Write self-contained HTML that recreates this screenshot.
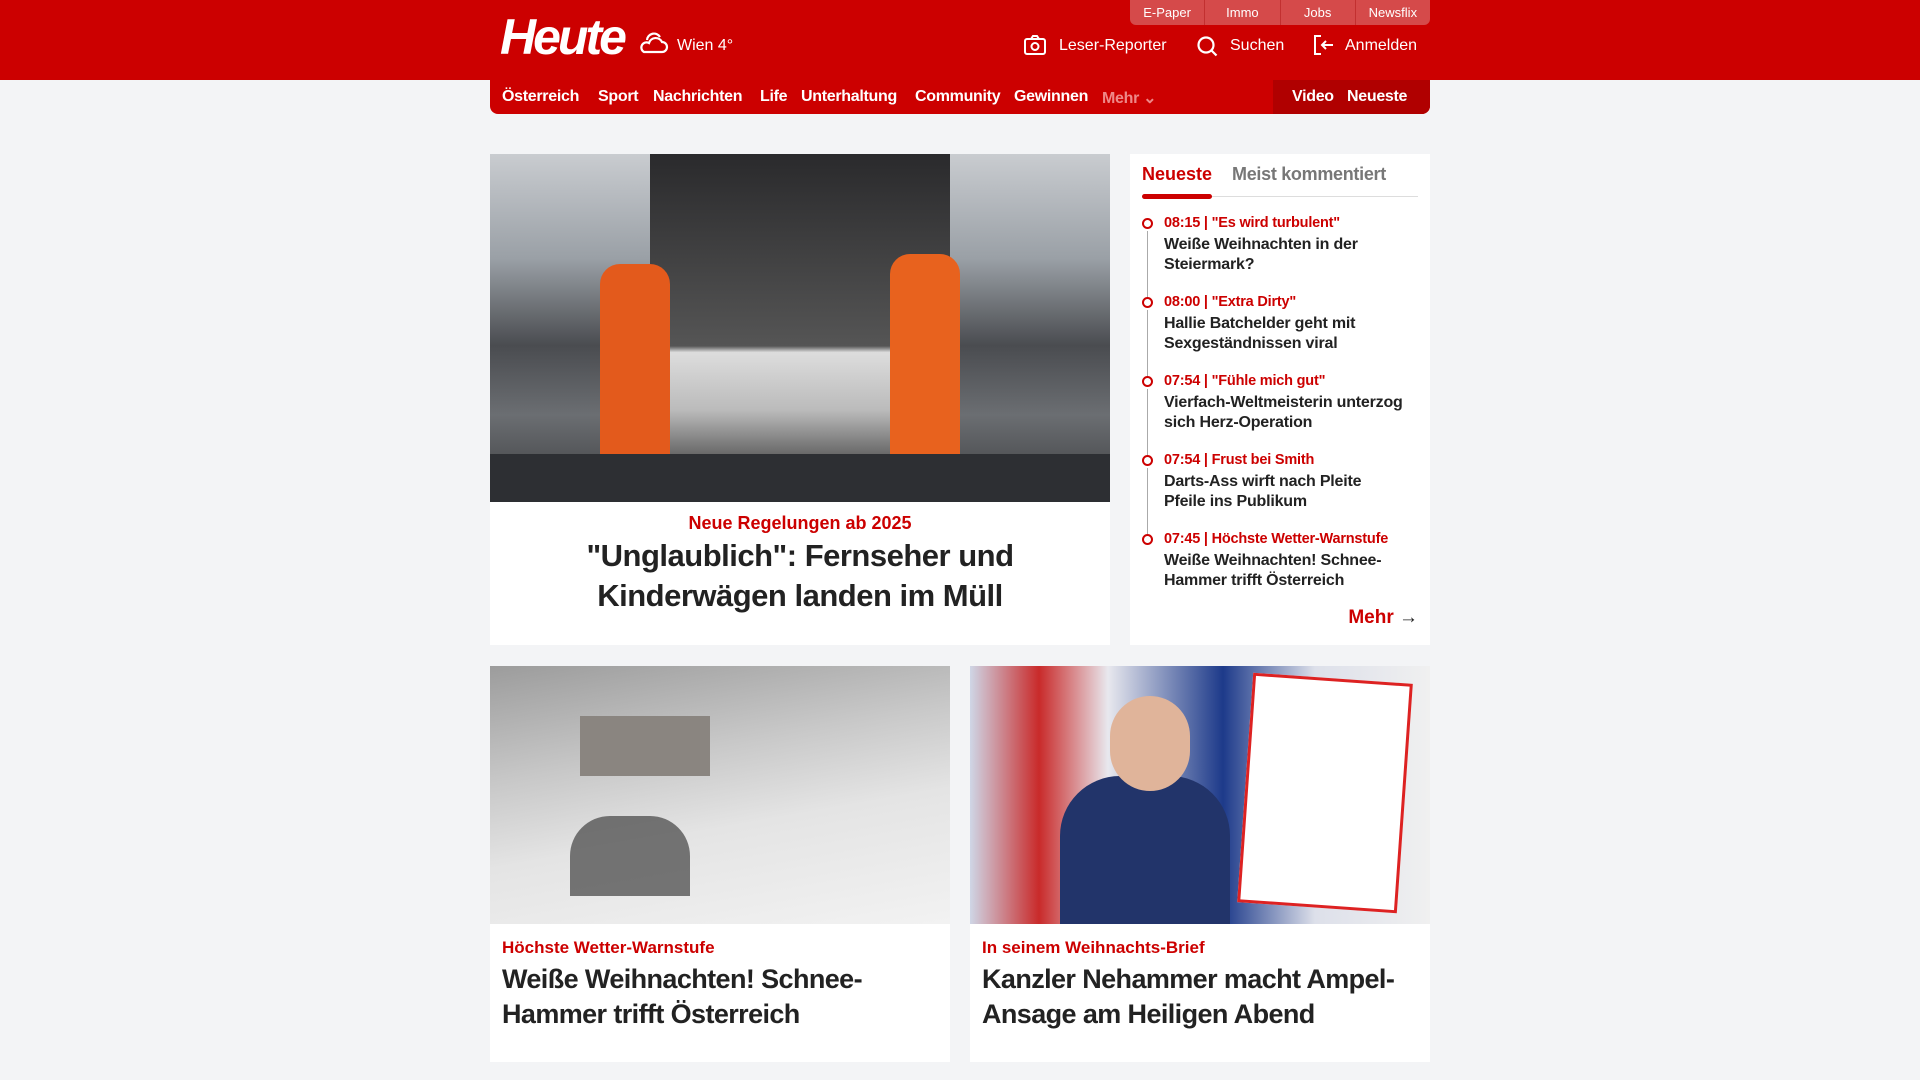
<!DOCTYPE html>
<html><head><meta charset="utf-8"><style>
*{box-sizing:border-box;margin:0;padding:0}
body{width:1920px;height:1080px;background:#f3f4f6;font-family:"Liberation Sans",sans-serif;overflow:hidden;position:relative}
.hdr{position:absolute;left:0;top:0;width:1920px;height:80px;background:#cc0000}
.abs{position:absolute}
.toptabs{position:absolute;left:1130px;top:0;width:300px;height:25px;background:#d54a4a;border-radius:0 0 6px 6px;display:flex}
.toptabs div{flex:1;color:#fff;font-size:13px;text-align:center;line-height:25px;border-left:1px solid #c23030}
.toptabs div:first-child{border-left:none}
.logo{left:500px;top:8px;color:#fff;font-weight:bold;font-style:italic;font-size:50px;letter-spacing:-3px}
.w{color:#fff;font-size:16px}
.nav{position:absolute;left:490px;top:80px;width:940px;height:34px;background:#cc0000;border-radius:0 0 8px 8px;}
.nav span{position:absolute;top:8px;color:#fff;font-weight:bold;font-size:16px;letter-spacing:-0.3px}
.vn{position:absolute;left:783px;top:0;width:157px;height:34px;background:#b00000;border-radius:0 0 8px 0}
.card{position:absolute;background:#fff}
.kick{color:#cc0000;font-weight:bold}
.t{color:#222;font-weight:bold}
.side .it{position:absolute;left:34px;width:262px}
.side .it .k{color:#cc0000;font-weight:bold;font-size:14.5px;line-height:18px;letter-spacing:-0.2px}
.side .it .h{color:#222;font-weight:bold;font-size:16px;line-height:20px;margin-top:3px;letter-spacing:-0.2px}
.dot{position:absolute;left:12px;width:11px;height:11px;border:2px solid #cc0000;border-radius:50%}
.ln{position:absolute;left:17px;width:1px;background:#aaa}
</style></head><body>
<div class="hdr"></div>
<div class="toptabs"><div>E-Paper</div><div>Immo</div><div>Jobs</div><div>Newsflix</div></div>
<div class="abs logo">Heute</div>
<svg class="abs" style="left:638px;top:28px" width="32" height="28" viewBox="0 0 32 28" fill="none" stroke="#fff" stroke-width="2.2"><path d="M9 12a7 7 0 0 1 13-3"/><path d="M6 24h18a5 5 0 0 0 0-10 7 7 0 0 0-13 1 5 5 0 0 0-5 9z"/></svg>
<div class="abs w" style="left:677px;top:37px">Wien 4°</div>
<svg class="abs" style="left:1024px;top:35px" width="22" height="20" viewBox="0 0 22 20" fill="none" stroke="#fff" stroke-width="2"><rect x="1" y="4" width="20" height="15" rx="2"/><path d="M7 4l2-3h4l2 3"/><circle cx="11" cy="11.5" r="3.5"/></svg>
<div class="abs w" style="left:1059px;top:37px">Leser-Reporter</div>
<svg class="abs" style="left:1196px;top:35px" width="22" height="22" viewBox="0 0 22 22" fill="none" stroke="#fff" stroke-width="2.2"><circle cx="10" cy="10" r="7.5"/><path d="M15.5 15.5l5 5"/></svg>
<div class="abs w" style="left:1230px;top:37px">Suchen</div>
<svg class="abs" style="left:1313px;top:35px" width="22" height="20" viewBox="0 0 22 20" fill="none" stroke="#fff" stroke-width="2"><path d="M8 1H2v18h6"/><path d="M20 10H9M13 6l-4 4 4 4"/></svg>
<div class="abs w" style="left:1345px;top:37px">Anmelden</div>
<div class="nav">
<span style="left:12px">Österreich</span><span style="left:108px">Sport</span><span style="left:163px">Nachrichten</span><span style="left:270px">Life</span><span style="left:311px">Unterhaltung</span><span style="left:425px">Community</span><span style="left:524px">Gewinnen</span><span style="left:612px;color:#e88">Mehr ⌄</span>
<div class="vn"></div><span style="left:802px">Video</span><span style="left:857px">Neueste</span>
</div>

<div class="card" style="left:490px;top:154px;width:620px;height:491px">
<div style="position:absolute;left:0;top:0;width:620px;height:348px;background:linear-gradient(180deg,#c9ccd0 0%,#9aa0a6 30%,#4a4c50 55%,#6b6e72 75%,#3a3b3d 100%)">
<div style="position:absolute;left:160px;top:0;width:300px;height:320px;background:linear-gradient(#2a2a2c,#555 60%,#ddd 62%,#bbb 80%,#444)"></div>
<div style="position:absolute;left:110px;top:110px;width:70px;height:200px;background:#e35a1c;border-radius:20px 20px 4px 4px"></div>
<div style="position:absolute;left:400px;top:100px;width:70px;height:210px;background:#e8621e;border-radius:20px 20px 4px 4px"></div>
<div style="position:absolute;left:0;top:300px;width:620px;height:48px;background:#2d2f33"></div>
</div>
<div class="kick" style="position:absolute;top:359px;width:100%;text-align:center;font-size:18px">Neue Regelungen ab 2025</div>
<div class="t" style="position:absolute;top:382px;width:100%;text-align:center;font-size:31px;line-height:40px;letter-spacing:-0.5px">"Unglaublich": Fernseher und<br>Kinderwägen landen im Müll</div>
</div>

<div class="card side" style="left:1130px;top:154px;width:300px;height:491px">
<div style="position:absolute;left:12px;top:10px;font-weight:bold;font-size:18px;color:#cc0000">Neueste</div>
<div style="position:absolute;left:102px;top:10px;font-weight:bold;font-size:18px;color:#777;letter-spacing:-0.3px">Meist kommentiert</div>
<div style="position:absolute;left:12px;top:42px;width:276px;height:1px;background:#ddd"></div>
<div style="position:absolute;left:12px;top:40px;width:70px;height:5px;background:#cc0000;border-radius:3px"></div>
<div class="dot" style="top:64px"></div><div class="ln" style="top:77px;height:66px"></div>
<div class="dot" style="top:143px"></div><div class="ln" style="top:156px;height:66px"></div>
<div class="dot" style="top:222px"></div><div class="ln" style="top:235px;height:66px"></div>
<div class="dot" style="top:301px"></div><div class="ln" style="top:314px;height:66px"></div>
<div class="dot" style="top:380px"></div>
<div class="it" style="top:60px"><div class="k">08:15 | "Es wird turbulent"</div><div class="h">Weiße Weihnachten in der Steiermark?</div></div>
<div class="it" style="top:139px"><div class="k">08:00 | "Extra Dirty"</div><div class="h">Hallie Batchelder geht mit Sexgeständnissen viral</div></div>
<div class="it" style="top:218px"><div class="k">07:54 | "Fühle mich gut"</div><div class="h">Vierfach-Weltmeisterin unterzog sich Herz-Operation</div></div>
<div class="it" style="top:297px"><div class="k">07:54 | Frust bei Smith</div><div class="h" style="width:230px">Darts-Ass wirft nach Pleite Pfeile ins Publikum</div></div>
<div class="it" style="top:376px"><div class="k">07:45 | Höchste Wetter-Warnstufe</div><div class="h">Weiße Weihnachten! Schnee-Hammer trifft Österreich</div></div>
<div style="position:absolute;right:12px;top:453px;font-weight:bold;font-size:19px;color:#cc0000">Mehr <span style="color:#222">→</span></div>
</div>

<div class="card" style="left:490px;top:666px;width:460px;height:396px">
<div style="position:absolute;left:0;top:0;width:460px;height:258px;background:linear-gradient(170deg,#9c9c9c 0%,#c8c8c8 35%,#e4e4e4 60%,#f2f2f2 100%)">
<div style="position:absolute;left:90px;top:50px;width:130px;height:60px;background:#8a8580"></div>
<div style="position:absolute;left:80px;top:150px;width:120px;height:80px;background:#555;border-radius:40px 40px 0 0;opacity:.8"></div>
</div>
<div class="kick" style="position:absolute;left:12px;top:272px;font-size:17px">Höchste Wetter-Warnstufe</div>
<div class="t" style="position:absolute;left:12px;top:296px;font-size:27px;line-height:35px;letter-spacing:-0.6px;white-space:nowrap">Weiße Weihnachten! Schnee-<br>Hammer trifft Österreich</div>
</div>

<div class="card" style="left:970px;top:666px;width:460px;height:396px">
<div style="position:absolute;left:0;top:0;width:460px;height:258px;background:linear-gradient(90deg,#cfd6e6 0%,#c92a2a 15%,#e8e8ee 30%,#1d3a8a 55%,#dde0ea 75%,#f0f0f0 100%)">
<div style="position:absolute;left:90px;top:110px;width:170px;height:148px;background:#22346a;border-radius:60px 60px 0 0"></div>
<div style="position:absolute;left:140px;top:30px;width:80px;height:95px;background:#e0b49a;border-radius:40px"></div>
<div style="position:absolute;left:275px;top:12px;width:160px;height:230px;background:#fff;border:3px solid #d22;transform:rotate(4deg)"></div>
</div>
<div class="kick" style="position:absolute;left:12px;top:272px;font-size:17px">In seinem Weihnachts-Brief</div>
<div class="t" style="position:absolute;left:12px;top:296px;font-size:27px;line-height:35px;letter-spacing:-0.6px;white-space:nowrap">Kanzler Nehammer macht Ampel-<br>Ansage am Heiligen Abend</div>
</div>
</body></html>
